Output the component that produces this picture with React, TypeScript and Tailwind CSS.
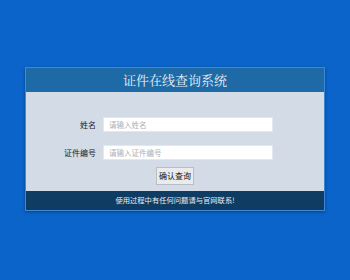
const FONT = { fontFamily: '"Noto Sans CJK SC", "Noto Sans", sans-serif' };

function Field({ label, placeholder }: { label: string; placeholder: string }) {
  return (
    <div className="flex items-center">
      <label className="w-[77px] pr-[7px] text-right text-[8px] text-[#222]">{label}</label>
      <input
        placeholder={placeholder}
        className="h-[15px] w-[170px] border border-[#e3e8ee] bg-white px-[5px] text-[7.5px] text-[#333] outline-none placeholder:text-[#aab0b8]"
      />
    </div>
  );
}

export default function App() {
  return (
    <div className="h-[280px] w-[350px] bg-[#0b64c9] pt-[67px]" style={FONT}>
      <div className="mx-auto w-[300px] border border-[#3f8ad6] shadow-[0_1px_3px_rgba(0,0,0,0.35)]">
        <div className="flex h-[24px] items-center justify-center bg-[#1e6aa6] text-[13px] text-[#e8f0f8]"
          style={{ fontFamily: '"Noto Serif CJK SC", "Noto Sans CJK SC", serif' }}>
          证件在线查询系统
        </div>
        <div className="flex h-[99px] flex-col bg-[#d3dce6] pt-[25px]">
          <Field label="姓名" placeholder="请输入姓名" />
          <div className="mt-[13px]">
            <Field label="证件编号" placeholder="请输入证件编号" />
          </div>
          <div className="mt-[7px] flex justify-center">
            <button className="h-[18px] w-[38px] border border-[#b9bec5] bg-[#e9ebee] text-[8px] text-[#111]">
              确认查询
            </button>
          </div>
        </div>
        <div className="flex h-[19px] items-center justify-center bg-[#0e3c63] text-[7.3px] text-[#e6eef6]">
          使用过程中有任何问题请与官网联系!
        </div>
      </div>
    </div>
  );
}
